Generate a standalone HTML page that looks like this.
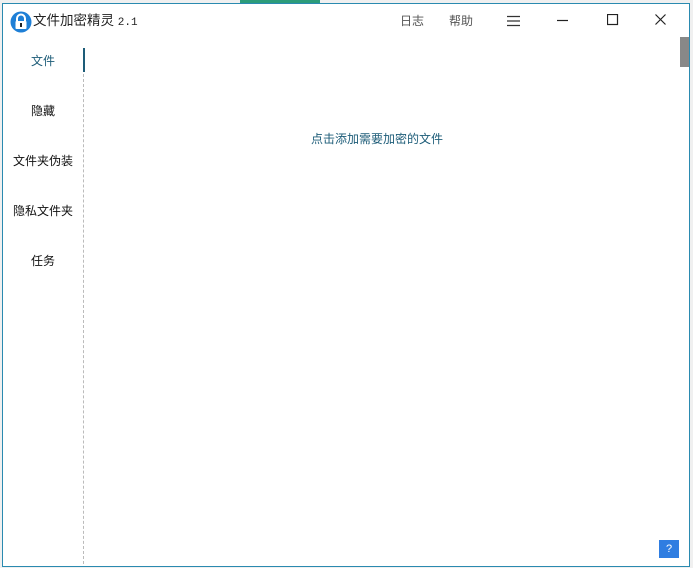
<!DOCTYPE html>
<html><head><meta charset="utf-8"><style>
body{margin:0;width:693px;height:568px;background:#f0f0f0;position:relative;overflow:hidden;font-family:"Liberation Sans","Noto Sans CJK SC",sans-serif;}
.win{position:absolute;left:2px;top:3px;width:686px;height:562px;background:#fff;border:1px solid #2a8ab0;}
.t{position:absolute;font-size:12px;color:#222;white-space:nowrap;line-height:16px;}
.nav{position:absolute;left:0;width:80px;text-align:center;font-size:12px;color:#111;line-height:16px;}
.top{position:absolute;left:240px;top:0;width:80px;height:3px;background:#2c9c7a;}
</style></head><body>
<div class="top"></div>
<div class="win">
  <svg style="position:absolute;left:7px;top:7px" width="22" height="22" viewBox="0 0 22 22">
    <circle cx="11" cy="11" r="10.5" fill="#1e7fd6"/>
    <path d="M7 10V7.5a4 4 0 0 1 8 0V10" stroke="#fff" stroke-width="2" fill="none"/>
    <rect x="5.5" y="10" width="11" height="8" rx="1" fill="#fff"/>
    <rect x="10" y="12" width="2" height="4" fill="#222"/>
  </svg>
  <div class="t" style="left:30px;top:9px;font-size:13.5px">文件加密精灵 <span style="font-family:'Liberation Mono',monospace;font-size:11px">2.1</span></div>
  <div class="t" style="left:397px;top:9px;color:#555">日志</div>
  <div class="t" style="left:446px;top:9px;color:#555">帮助</div>
  <svg style="position:absolute;left:504px;top:11px" width="14" height="12"><path d="M0 1.5H13M0 6H13M0 10.5H13" stroke="#333" stroke-width="1.2"/></svg>
  <svg style="position:absolute;left:554px;top:15px" width="12" height="3"><path d="M0 1.5H11" stroke="#222" stroke-width="1.2"/></svg>
  <svg style="position:absolute;left:604px;top:10px" width="12" height="12"><rect x="0.5" y="0.5" width="10" height="10" fill="none" stroke="#222" stroke-width="1.2"/></svg>
  <svg style="position:absolute;left:652px;top:10px" width="12" height="12"><path d="M0.5 0.5L10.5 10.5M10.5 0.5L0.5 10.5" stroke="#222" stroke-width="1.2"/></svg>
  <div style="position:absolute;left:677px;top:33px;width:9px;height:30px;background:#888"></div>
  <div style="position:absolute;left:80px;top:44px;width:2px;height:24px;background:#1d5c78"></div>
  <div style="position:absolute;left:80px;top:70px;height:490px;border-left:1px dashed #bbb"></div>
  <div class="nav" style="top:49px;color:#1d5c78">文件</div>
  <div class="nav" style="top:99px">隐藏</div>
  <div class="nav" style="top:149px">文件夹伪装</div>
  <div class="nav" style="top:199px">隐私文件夹</div>
  <div class="nav" style="top:249px">任务</div>
  <div class="t" style="left:308px;top:127px;color:#1d5c78">点击添加需要加密的文件</div>
  <div style="position:absolute;left:656px;top:536px;width:20px;height:18px;background:#2f7de1;color:#fff;font-size:11px;text-align:center;line-height:18px">?</div>
</div>
</body></html>
